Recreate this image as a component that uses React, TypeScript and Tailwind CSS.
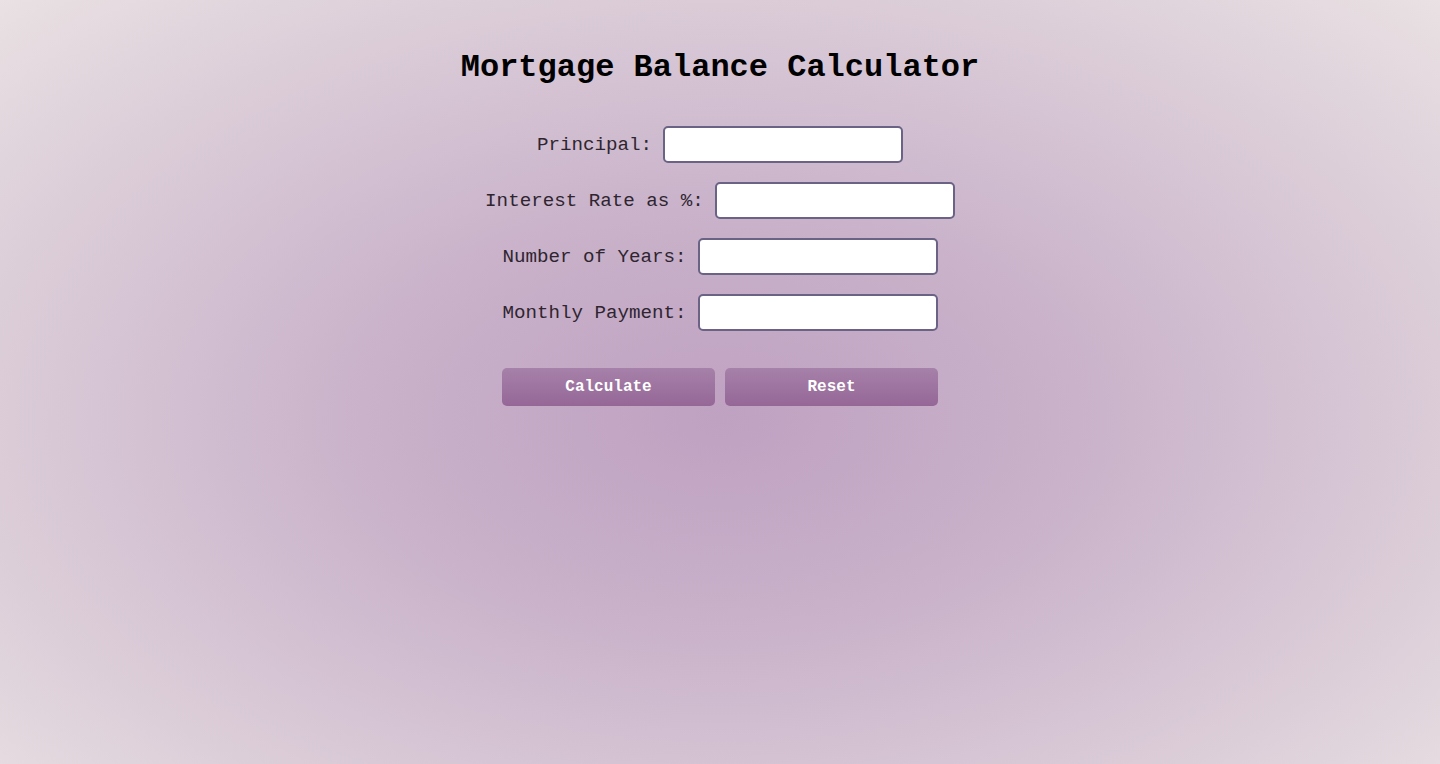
import React, { useState } from "react";

const fields = [
  { id: "principal", label: "Principal:" },
  { id: "rate", label: "Interest Rate as %:" },
  { id: "years", label: "Number of Years:" },
  { id: "payment", label: "Monthly Payment:" },
];

export default function App() {
  const [values, setValues] = useState<Record<string, string>>({});

  const reset = () => setValues({});

  return (
    <div className="min-h-screen w-full bg-[radial-gradient(ellipse_at_50%_55%,#bfa1c1_0%,#c9b2ca_35%,#e9e1e3_100%)] font-['Liberation_Mono','Courier_New',monospace]">
      <div className="flex flex-col items-center pt-[50px]">
        <h1 className="text-[32px] font-bold leading-[36px] text-black">
          Mortgage Balance Calculator
        </h1>

        <form
          className="mt-[40px] flex flex-col items-center gap-[19px]"
          onSubmit={(e) => e.preventDefault()}
        >
          {fields.map((f) => (
            <div key={f.id} className="flex items-center gap-[11px]">
              <label htmlFor={f.id} className="text-[19.2px] leading-[24px] text-[#2f2530]">
                {f.label}
              </label>
              <input
                id={f.id}
                type="text"
                value={values[f.id] ?? ""}
                onChange={(e) => setValues({ ...values, [f.id]: e.target.value })}
                className="h-[37px] w-[240px] rounded-[5px] border-2 border-[#6b6385] bg-white px-2 text-[16px] outline-none"
              />
            </div>
          ))}

          <div className="mt-[18px] flex gap-[10px]">
            <button
              type="submit"
              className="h-[38px] w-[213px] rounded-[5px] bg-gradient-to-b from-[#a681a9] to-[#956797] text-[16px] font-bold text-white"
            >
              Calculate
            </button>
            <button
              type="button"
              onClick={reset}
              className="h-[38px] w-[213px] rounded-[5px] bg-gradient-to-b from-[#a681a9] to-[#956797] text-[16px] font-bold text-white"
            >
              Reset
            </button>
          </div>
        </form>
      </div>
    </div>
  );
}
